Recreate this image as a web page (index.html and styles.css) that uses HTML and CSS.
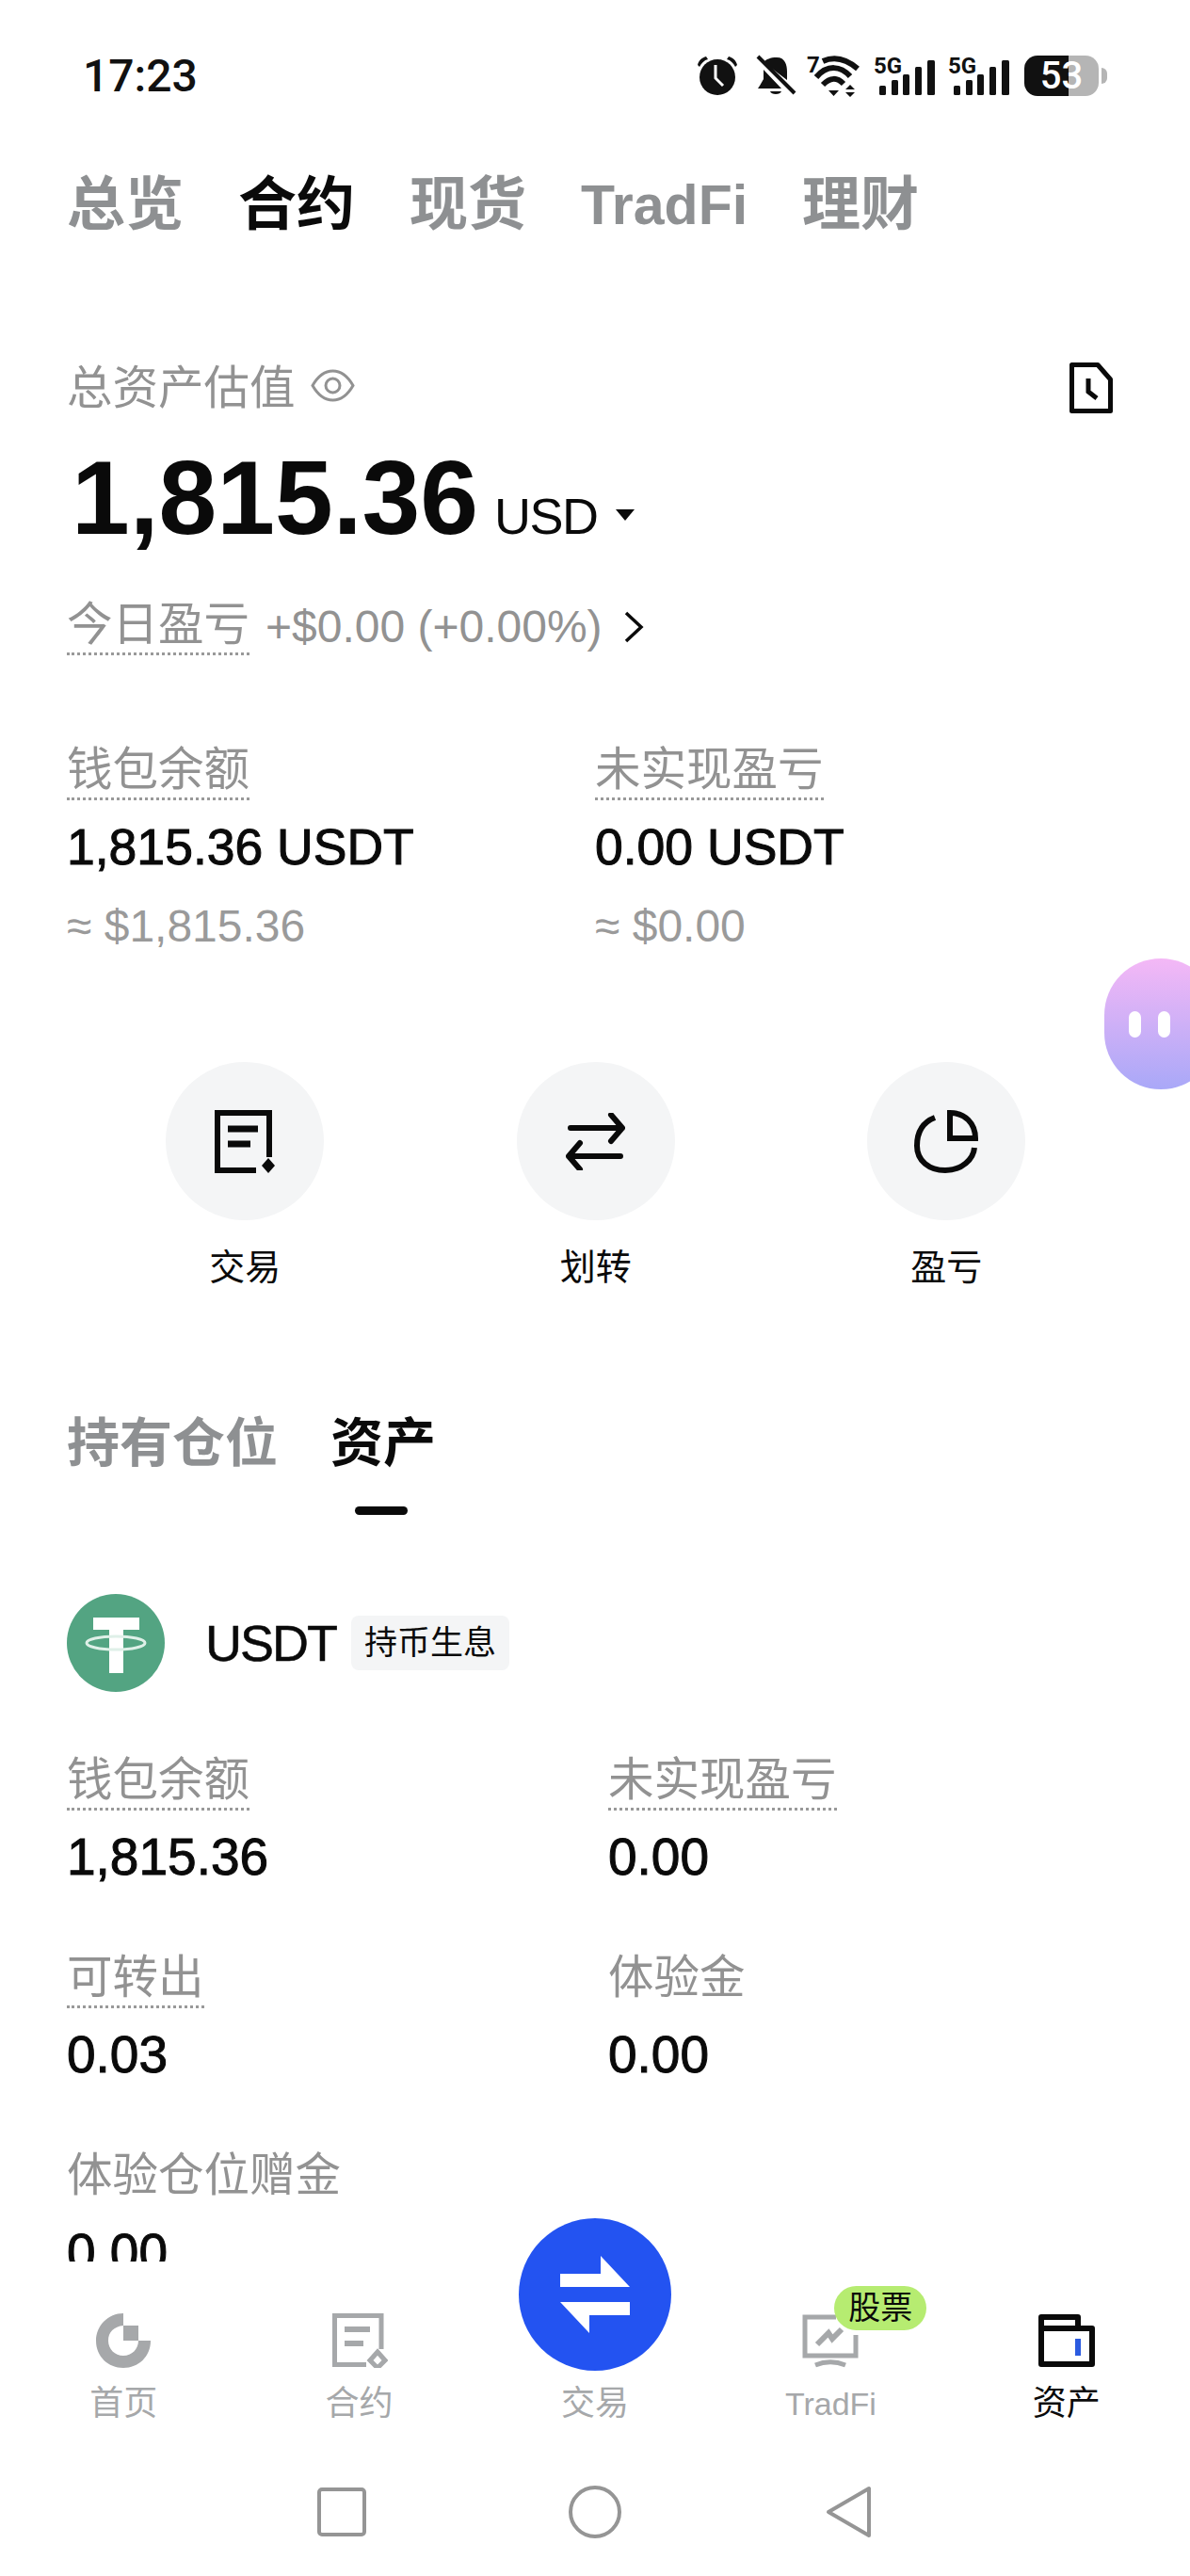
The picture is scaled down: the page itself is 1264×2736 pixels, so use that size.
FILE: index.html
```html
<!DOCTYPE html>
<html lang="zh-CN">
<head>
    <meta charset="UTF-8">
    <meta name="viewport" content="width=device-width, initial-scale=1.0">
    <title>资产</title>
    <link rel="stylesheet" href="styles.css">
</head>
<body>
    <div class="page">
        <div class="scroll">
            <div class="status-bar">
                <span class="clock">17:23</span>
                <div class="status-icons">
                    <svg class="ic-alarm" viewBox="0 0 44 42"><path d="M1 10 C2 5 6 2 10 1 L12 4 C8 5 5 8 3 12Z M43 10 C42 5 38 2 34 1 L32 4 C36 5 39 8 41 12Z" fill="#111"/><circle cx="22" cy="23" r="19" fill="#111"/><path d="M20 10 V24 L28 32" fill="none" stroke="#fff" stroke-width="3"/></svg>
                    <svg class="ic-bell" viewBox="0 0 42 45"><path d="M8 8 C11 5 15 3 22 3 C31 3 33 11 33 18 V27 Z M4 33 L8 26 V16 L27 36 H2Z M15 39 H27 C26 43 16 43 15 39Z" fill="#111"/><path d="M2 2 L41 41" stroke="#111" stroke-width="4"/></svg>
                    <svg class="ic-wifi" viewBox="0 0 58 46"><text x="0" y="20" class="svg-small">7</text><path d="M17 8 C28 3 40 4 54 16 M10 25 C22 11 36 13 46 24 M17 33 C25 25 32 25 39 32" fill="none" stroke="#111" stroke-width="6"/><path d="M23 39 H34 L28.500 45Z M46 33 L51 38 H41Z M41 41 H51 L46 46Z" fill="#111"/></svg>
                    <svg class="ic-signal" viewBox="0 0 65 44"><text x="0" y="20" class="svg-small">5G</text><rect x="6" y="33" width="7" height="10" rx="1.500" fill="#111"/><rect x="19" y="27" width="7" height="16" rx="1.500" fill="#111"/><rect x="31" y="21" width="7" height="22" rx="1.500" fill="#111"/><rect x="44" y="13" width="7" height="30" rx="1.500" fill="#111"/><rect x="57" y="6" width="8" height="37" rx="1.500" fill="#111"/></svg>
                    <svg class="ic-signal" viewBox="0 0 65 44"><text x="0" y="20" class="svg-small">5G</text><rect x="6" y="33" width="7" height="10" rx="1.500" fill="#111"/><rect x="19" y="27" width="7" height="16" rx="1.500" fill="#111"/><rect x="31" y="21" width="7" height="22" rx="1.500" fill="#111"/><rect x="44" y="13" width="7" height="30" rx="1.500" fill="#111"/><rect x="57" y="6" width="8" height="37" rx="1.500" fill="#111"/></svg>
                    <div class="battery">53</div>
                </div>
            </div>

            <div class="top-tabs">
                <span class="top-tab">总览</span>
                <span class="top-tab active">合约</span>
                <span class="top-tab">现货</span>
                <span class="top-tab latin">TradFi</span>
                <span class="top-tab">理财</span>
            </div>

            <div class="total-head">
                <div class="total-label">
                    <span>总资产估值</span>
                    <svg class="ic-eye" viewBox="0 0 47 35"><path d="M2 17.500 C8 7 15 2 23.500 2 C32 2 39 7 45 17.500 C39 28 32 33 23.500 33 C15 33 8 28 2 17.500Z" fill="none" stroke="#929292" stroke-width="3"/><circle cx="23.500" cy="17.500" r="7.500" fill="none" stroke="#929292" stroke-width="3"/></svg>
                </div>
                <svg class="ic-doc" viewBox="0 0 46 54"><path d="M2.500 2.500 H30 L43.500 18 V51.500 H2.500Z" fill="none" stroke="#0a0a0a" stroke-width="5" stroke-linejoin="round"/><path d="M20 17 V31 L29 38" fill="none" stroke="#0a0a0a" stroke-width="5"/></svg>
            </div>

            <div class="total-value">
                <span class="total-num">1,815.36</span>
                <span class="total-unit">USD</span>
                <span class="caret"></span>
            </div>

            <div class="pnl-today">
                <span class="dotted">今日盈亏</span>
                <span>+$0.00 (+0.00%)</span>
                <svg class="ic-chevron" viewBox="0 0 22 36"><path d="M3 3 L19 18 L3 33" fill="none" stroke="#0a0a0a" stroke-width="3.500"/></svg>
            </div>

            <div class="balance-grid">
                <div class="balance-col">
                    <div><span class="dotted">钱包余额</span></div>
                    <div class="balance-main">1,815.36 USDT</div>
                    <div class="balance-sub">≈ $1,815.36</div>
                </div>
                <div class="balance-col">
                    <div><span class="dotted">未实现盈亏</span></div>
                    <div class="balance-main">0.00 USDT</div>
                    <div class="balance-sub">≈ $0.00</div>
                </div>
            </div>

            <div class="actions">
                <div class="action">
                    <div class="action-circle">
                        <svg class="ic-trade" viewBox="0 0 64 67"><path d="M44 64 H3 V3 H58 V50" fill="none" stroke="#0a0a0a" stroke-width="6"/><path d="M14 20 H46 M14 36 H38" stroke="#0a0a0a" stroke-width="7"/><path d="M57 51 L64 59 L57 67 L50 59Z" fill="#0a0a0a"/></svg>
                    </div>
                    <span>交易</span>
                </div>
                <div class="action">
                    <div class="action-circle">
                        <svg class="ic-transfer" viewBox="0 0 63 61"><path d="M5 16 H60 L48 2 M60 16 L48 30 M58 46 H3 L15 32 M3 46 L15 60" fill="none" stroke="#0a0a0a" stroke-width="6" stroke-linecap="round" stroke-linejoin="round"/></svg>
                    </div>
                    <span>划转</span>
                </div>
                <div class="action">
                    <div class="action-circle">
                        <svg class="ic-pie" viewBox="0 0 68 67"><path d="M22 8 C9 13 3 24 3 38 C3 54 16 64 33 64 C51 64 63 52 64 40" fill="none" stroke="#0a0a0a" stroke-width="6"/><path d="M38 3 C54 3 65 14 65 30 H38Z" fill="none" stroke="#0a0a0a" stroke-width="6"/></svg>
                    </div>
                    <span>盈亏</span>
                </div>
            </div>

            <div class="sub-tabs">
                <span class="sub-tab">持有仓位</span>
                <span class="sub-tab active">资产</span>
            </div>

            <div class="coin-head">
                <svg class="coin-logo" viewBox="0 0 104 104">
                    <circle cx="52" cy="52" r="52" fill="#53a482"/>
                    <path d="M28 25 H77 V38 H60 V84 H45 V38 H28Z" fill="#fff"/>
                    <ellipse cx="52" cy="52" rx="31" ry="7" fill="none" stroke="#dff0e8" stroke-width="3"/>
                </svg>
                <span class="coin-name">USDT</span>
                <span class="coin-tag">持币生息</span>
            </div>

            <div class="coin-grid">
                <div class="coin-cell">
                    <div><span class="dotted">钱包余额</span></div>
                    <div class="coin-val">1,815.36</div>
                </div>
                <div class="coin-cell">
                    <div><span class="dotted">未实现盈亏</span></div>
                    <div class="coin-val">0.00</div>
                </div>
                <div class="coin-cell">
                    <div><span class="dotted">可转出</span></div>
                    <div class="coin-val">0.03</div>
                </div>
                <div class="coin-cell">
                    <div><span class="plain-label">体验金</span></div>
                    <div class="coin-val">0.00</div>
                </div>
                <div class="coin-cell">
                    <div><span class="plain-label">体验仓位赠金</span></div>
                    <div class="coin-val">0.00</div>
                </div>
            </div>
        </div>

        <div class="assistant"><i></i><i></i></div>

        <div class="tabbar">
            <div class="fab">
                <svg viewBox="0 0 74 82"><path d="M0 19 H43 V0 L74 33 H0Z M0 49 H74 V63 H31 V82Z" fill="#fff"/></svg>
            </div>
            <div class="tabbar-item">
                <svg viewBox="0 0 58 58"><path d="M29 0 V13 C19 14 13 20 13 29 C13 38 20 45 29 45 C38 45 45 38 45 29 H58 C58 46 45 58 29 58 C13 58 0 46 0 29 C0 13 13 0 29 0Z M29 13 H45 V29 H29Z" fill="#a6a8aa"/></svg>
                <span>首页</span>
            </div>
            <div class="tabbar-item">
                <svg viewBox="0 0 58 58"><path d="M36 54.500 H2.500 V2.500 H52 V38" fill="none" stroke="#a6a8aa" stroke-width="5"/><path d="M13 17 H40 M13 32 H33" stroke="#a6a8aa" stroke-width="6"/><path d="M48 41 L56 50 L48 58 L40 50Z" fill="none" stroke="#a6a8aa" stroke-width="5"/></svg>
                <span>合约</span>
            </div>
            <div class="tabbar-item">
                <svg viewBox="0 0 58 58"></svg>
                <span>交易</span>
            </div>
            <div class="tabbar-item">
                <svg viewBox="0 0 60 56"><path d="M36 3 H3 V44 H57 V22" fill="none" stroke="#a6a8aa" stroke-width="5"/><path d="M14 54 C24 50 36 50 46 54" fill="none" stroke="#a6a8aa" stroke-width="5"/><path d="M16 32 L28 20 L32 26 L42 16" fill="none" stroke="#a6a8aa" stroke-width="6"/></svg>
                <span class="tabbar-latin">TradFi</span>
                <span class="badge">股票</span>
            </div>
            <div class="tabbar-item active">
                <svg viewBox="0 0 60 56"><path d="M3 53 V3 H42 V15 H57 V53Z M3 15 H42" fill="none" stroke="#0a0a0a" stroke-width="6" stroke-linejoin="round"/><rect x="39" y="26" width="6" height="18" fill="#2b5be0"/></svg>
                <span>资产</span>
            </div>
        </div>

        <div class="system-nav">
            <svg viewBox="0 0 52 52"><rect x="2" y="2" width="48" height="48" rx="3" fill="none" stroke="#959595" stroke-width="4"/></svg>
            <svg viewBox="0 0 56 56"><circle cx="28" cy="28" r="26" fill="none" stroke="#959595" stroke-width="4"/></svg>
            <svg viewBox="0 0 48 56"><path d="M46 3 V53 L3 28Z" fill="none" stroke="#959595" stroke-width="4" stroke-linejoin="round"/></svg>
        </div>
    </div>
</body>
</html>
```

FILE: styles.css
```css
body {
    margin: 0;
    background: #fff;
    font-family: "Liberation Sans", "Noto Sans CJK SC", sans-serif;
    color: #0a0a0a;
}
.page {
    position: relative;
    width: 1264px;
    height: 2736px;
    overflow: hidden;
}
.scroll {
    height: 2402px;
    overflow: hidden;
    padding: 0 71px;
    box-sizing: border-box;
}

/* status bar */
.status-bar {
    display: flex;
    justify-content: space-between;
    align-items: center;
    height: 44px;
    padding: 58px 26px 0 17px;
}
.clock {
    font-family: Roboto, sans-serif;
    font-size: 48px;
    font-weight: 500;
    color: #111;
}
.status-icons {
    display: flex;
    align-items: center;
    gap: 14px;
}
.status-icons svg { overflow: visible; }
.svg-small {
    font-family: Roboto, sans-serif;
    font-size: 24px;
    font-weight: 700;
    fill: #111;
}
.ic-alarm { width: 44px; height: 42px; margin-right: 5px; }
.ic-bell { width: 42px; height: 45px; margin-right: -2px; }
.ic-wifi { width: 58px; height: 46px; margin-right: -1px; }
.ic-signal { width: 65px; height: 44px; }
.ic-signal + .battery { margin-left: 2px; }
.battery {
    position: relative;
    width: 79px;
    height: 43px;
    border-radius: 14px;
    background: linear-gradient(90deg, #111 59%, #b5b5b5 59%);
    color: #fff;
    font-family: Roboto, sans-serif;
    font-size: 40px;
    font-weight: 500;
    line-height: 43px;
    text-align: center;
}
.battery::after {
    content: "";
    position: absolute;
    left: 82px;
    top: 13px;
    width: 6px;
    height: 17px;
    border-radius: 0 9px 9px 0;
    background: #b5b5b5;
}

/* top tabs */
.top-tabs {
    display: flex;
    gap: 58px;
    margin-top: 72px;
}
.top-tab {
    font-size: 62px;
    line-height: 88px;
    font-weight: 700;
    color: #8e9092;
}
.top-tab.latin { font-size: 59px; }
.top-tab.active { color: #0a0a0a; }

/* total */
.total-head {
    display: flex;
    justify-content: space-between;
    align-items: center;
    margin-top: 120px;
    padding-right: 11px;
}
.total-label {
    display: flex;
    align-items: center;
    gap: 16px;
    font-size: 48.500px;
    line-height: 60px;
    color: #929292;
}
.ic-eye { width: 47px; height: 35px; margin-bottom: 6px; }
.ic-doc { width: 46px; height: 54px; }
.total-value {
    display: flex;
    align-items: baseline;
    margin-top: 24px;
    padding-left: 5px;
}
.total-num {
    font-size: 111px;
    line-height: 126px;
    font-weight: 700;
}
.total-unit {
    margin-left: 17px;
    font-size: 54px;
    letter-spacing: -1.500px;
}
.caret {
    width: 0;
    height: 0;
    margin-left: 19px;
    border-left: 10px solid transparent;
    border-right: 10px solid transparent;
    border-top: 12px solid #0a0a0a;
    transform: translateY(-14px);
}
.pnl-today {
    display: flex;
    align-items: center;
    gap: 17px;
    margin-top: 43px;
    font-size: 48px;
    line-height: 60px;
    color: #929292;
}
.ic-chevron { width: 22px; height: 36px; margin-left: 5px; }
.dotted, .plain-label {
    display: inline-block;
    font-size: 48.500px;
    line-height: 56px;
    color: #929292;
}
.dotted {
    padding-bottom: 2px;
    border-bottom: 3px dotted #999;
}
.plain-label { padding-bottom: 5px; }

/* balances */
.balance-grid {
    display: grid;
    grid-template-columns: 561px 1fr;
    margin-top: 93px;
}
.balance-main {
    margin-top: 19px;
    font-size: 53.500px;
    line-height: 62px;
    -webkit-text-stroke: 1px #0a0a0a;
}
.balance-sub {
    margin-top: 23px;
    font-size: 48px;
    line-height: 60px;
    color: #9a9a9a;
}

/* actions */
.actions {
    display: grid;
    grid-template-columns: repeat(3, 372.500px);
    margin: 114px 0 0 3px;
}
.action {
    display: flex;
    flex-direction: column;
    align-items: center;
    gap: 25px;
    font-size: 38px;
    line-height: 50px;
}
.action-circle {
    display: flex;
    align-items: center;
    justify-content: center;
    width: 168px;
    height: 168px;
    border-radius: 50%;
    background: #f4f5f6;
}
.ic-trade { width: 64px; height: 67px; }
.ic-transfer { width: 63px; height: 61px; }
.ic-pie { width: 68px; height: 67px; }

/* sub tabs */
.sub-tabs {
    display: flex;
    gap: 56px;
    margin-top: 127px;
}
.sub-tab {
    position: relative;
    font-size: 56px;
    line-height: 70px;
    font-weight: 700;
    color: #8e9092;
}
.sub-tab.active { color: #0a0a0a; }
.sub-tab.active::after {
    content: "";
    position: absolute;
    left: 26px;
    top: 102px;
    width: 56px;
    height: 9px;
    border-radius: 5px;
    background: #0a0a0a;
}

/* coin */
.coin-head {
    display: flex;
    align-items: center;
    margin-top: 125px;
}
.coin-logo { width: 104px; height: 104px; }
.coin-name {
    margin-left: 43px;
    font-size: 54px;
    letter-spacing: -2px;
    -webkit-text-stroke: 0.5px #0a0a0a;
}
.coin-tag {
    margin-left: 16px;
    padding: 6px 14px;
    border-radius: 8px;
    background: #f4f5f6;
    font-size: 35px;
    line-height: 46px;
}
.coin-grid {
    display: grid;
    grid-template-columns: 575px 1fr;
    row-gap: 69px;
    margin-top: 65px;
}
.coin-val {
    margin-top: 18px;
    font-size: 55px;
    line-height: 62px;
    -webkit-text-stroke: 1px #0a0a0a;
}

/* floating assistant */
.assistant {
    position: absolute;
    left: 1173px;
    top: 1018px;
    display: flex;
    gap: 18px;
    align-items: center;
    width: 120px;
    height: 139px;
    padding-left: 26px;
    box-sizing: border-box;
    border-radius: 70px;
    background: linear-gradient(180deg, #f4b8f6, #a9a8f8);
}
.assistant i {
    width: 13px;
    height: 28px;
    border-radius: 7px;
    background: #fff;
}

/* bottom nav */
.tabbar {
    position: relative;
    display: grid;
    grid-template-columns: repeat(5, 1fr);
    height: 218px;
    padding: 55px 6px 0;
    box-sizing: border-box;
}
.fab {
    position: absolute;
    left: 551px;
    top: -46px;
    display: flex;
    align-items: center;
    justify-content: center;
    width: 162px;
    height: 162px;
    border-radius: 50%;
    background: #2353f1;
}
.fab svg { width: 74px; height: 82px; }
.tabbar-item {
    position: relative;
    display: flex;
    flex-direction: column;
    align-items: center;
    gap: 16px;
    font-size: 36px;
    line-height: 44px;
    color: #a6a8aa;
}
.tabbar-item svg { width: 60px; height: 58px; }
.tabbar-latin { font-size: 34px; }
.tabbar-item.active { color: #0a0a0a; }
.badge {
    position: absolute;
    left: 129px;
    top: -29px;
    width: 98px;
    height: 47px;
    border-radius: 24px;
    background: #b6ec71;
    color: #0a0a0a;
    font-size: 34px;
    line-height: 47px;
    text-align: center;
}
.system-nav {
    display: grid;
    grid-template-columns: repeat(3, 269px);
    justify-content: center;
    justify-items: center;
    align-items: center;
    padding-top: 20px;
}
.system-nav svg:nth-child(1) { width: 52px; height: 52px; }
.system-nav svg:nth-child(2) { width: 56px; height: 56px; }
.system-nav svg:nth-child(3) { width: 48px; height: 56px; }
```
